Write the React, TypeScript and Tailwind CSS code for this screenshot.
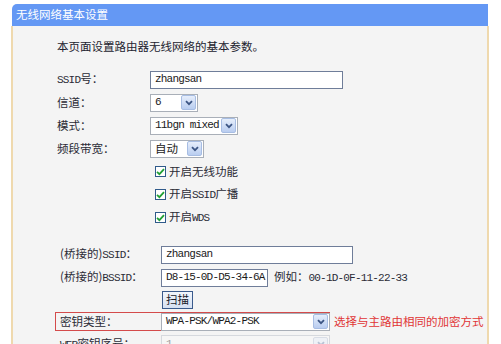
const cjk = "font-['Noto_Sans_CJK_SC','Liberation_Sans',sans-serif]";
const mono = "font-['Liberation_Mono','Noto_Sans_CJK_SC',monospace] text-[11px] tracking-[-0.8px]";

function Arrow({ disabled }: { disabled?: boolean }) {
  return (
    <span
      className={`ml-auto mr-px flex h-[15px] w-[15px] items-center justify-center rounded-[2px] border ${
        disabled ? "border-[#d8dde6] bg-[#eef1f6]" : "border-[#a7bde3] bg-gradient-to-b from-[#e6eefb] to-[#b9cdf0]"
      }`}
    >
      <svg width="8" height="6" viewBox="0 0 8 6">
        <path
          d="M1 1.2 L4 4.2 L7 1.2"
          fill="none"
          stroke={disabled ? "#b8c2d4" : "#3c5584"}
          strokeWidth="1.8"
        />
      </svg>
    </span>
  );
}

function Select({ w, value, latin, disabled }: { w: string; value: string; latin?: boolean; disabled?: boolean }) {
  return (
    <div
      className={`flex h-[18px] ${w} items-center border ${
        disabled ? "border-[#d6d9de] bg-[#f6f6f6] text-[#a0a0a0]" : "border-[#a9afb8] bg-white text-[#1a1a1a]"
      }`}
    >
      <span className={`pl-[4px] ${latin ? mono : "text-[11.5px]"}`}>{value}</span>
      <Arrow disabled={disabled} />
    </div>
  );
}

function Input({ w, value }: { w: string; value: string }) {
  return (
    <div className={`flex h-[18px] ${w} items-center border border-[#6f7d99] bg-white pl-[4px] ${mono} text-[#1a1a1a]`}>
      {value}
    </div>
  );
}

function Check({ children }: { children: React.ReactNode }) {
  return (
    <div className="flex h-[23px] items-center pl-[98px]">
      <span className="flex h-[11px] w-[11px] items-center justify-center border border-[#2f5a8a] bg-white">
        <svg width="9" height="8" viewBox="0 0 9 8">
          <path d="M1 3.8 L3.4 6.2 L8 1.2" fill="none" stroke="#21a035" strokeWidth="1.8" />
        </svg>
      </span>
      <span className="ml-[3px] text-[11.5px] text-[#2b2b36]">{children}</span>
    </div>
  );
}

function Row({ label, children }: { label: React.ReactNode; children: React.ReactNode }) {
  return (
    <div className="flex h-[23px] items-center">
      <span className="w-[93px] text-[11.5px] text-[#2b2b36]">{label}</span>
      {children}
    </div>
  );
}

function BRow({ label, children, h = "h-[23px]" }: { label: React.ReactNode; children?: React.ReactNode; h?: string }) {
  return (
    <div className={`flex ${h} items-center`}>
      <span className="w-[104px] pl-[3px] text-[11.5px] text-[#2b2b36]">{label}</span>
      {children}
    </div>
  );
}

const L = ({ children }: { children: React.ReactNode }) => <span className={mono}>{children}</span>;

export default function App() {
  return (
    <div className={`h-[344px] w-[501px] overflow-hidden bg-white pt-[4px] ${cjk}`}>
      <div className="ml-[11px] w-[478px]">
        <div className="ml-px flex h-[22px] w-[476px] items-center rounded-tl-[5px] bg-[#6498f4] pl-[4px] text-[11.5px] text-white">
          无线网络基本设置
        </div>
        <div className="h-[400px] border-x-2 border-[#efd9ae] bg-[#f4f4f4] pl-[44px] pt-[12px]">
          <div className="h-[16px] text-[11.5px] leading-[16px] text-[#22222e]">本页面设置路由器无线网络的基本参数。</div>

          <div className="mt-[14px]">
            <Row label={<><L>SSID</L>号：</>}>
              <Input w="w-[193px]" value="zhangsan" />
            </Row>
            <Row label="信道：">
              <Select w="w-[48px]" value="6" latin />
            </Row>
            <Row label="模式：">
              <Select w="w-[88px]" value="11bgn mixed" latin />
            </Row>
            <Row label="频段带宽：">
              <Select w="w-[54px]" value="自动" />
            </Row>
            <Check>开启无线功能</Check>
            <Check>
              开启<L>SSID</L>广播
            </Check>
            <Check>
              开启<L>WDS</L>
            </Check>
          </div>

          <div className="mt-[14px]">
            <BRow label={<>(桥接的)<L>SSID</L>：</>}>
              <Input w="w-[192px]" value="zhangsan" />
            </BRow>
            <BRow label={<>(桥接的)<L>BSSID</L>：</>}>
              <Input w="w-[107px]" value="D8-15-0D-D5-34-6A" />
              <span className="ml-[6px] text-[11.5px] text-[#2b2b36]">
                例如：<L>00-1D-0F-11-22-33</L>
              </span>
            </BRow>
            <BRow label="" h="h-[21.5px]">
              <button className="ml-px flex h-[18px] w-[31px] items-center justify-center border border-[#3a5a8c] bg-gradient-to-b from-[#f2f6fc] to-[#d6e1f2] text-[11.5px] leading-none text-[#1a1a2a]">
                扫描
              </button>
            </BRow>
            <div className="flex h-[22px] items-center">
              <div className="-ml-[2px] flex h-[19px] w-[275px] items-center border border-[#d44b4b]">
                <span className="w-[105px] pl-[4px] text-[11.5px] text-[#2b2b36]">密钥类型：</span>
                <Select w="flex-1 -my-px -mr-px" value="WPA-PSK/WPA2-PSK" latin />
              </div>
              <span className="ml-[4px] text-[11.5px] text-[#e03434]">选择与主路由相同的加密方式</span>
            </div>
            <BRow label={<><L>WEP</L>密钥序号：</>}>
              <Select w="w-[169px]" value="1" latin disabled />
            </BRow>
          </div>
        </div>
      </div>
    </div>
  );
}
